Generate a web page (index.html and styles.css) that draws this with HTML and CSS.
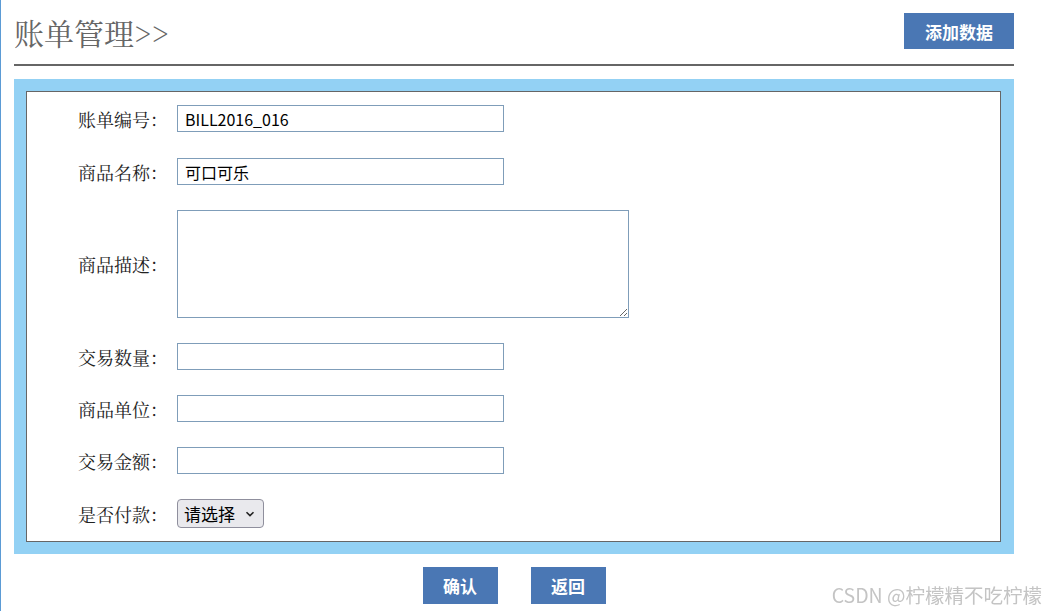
FILE: index.html
```html
<!DOCTYPE html>
<html lang="zh-CN">
<head>
<meta charset="utf-8">
<title>账单管理</title>
<link rel="stylesheet" href="styles.css">
</head>
<body>
<div class="page">
  <div class="header">
    <h1 class="title">账单管理&gt;&gt;</h1>
    <a class="btn btn-add" href="#">添加数据</a>
  </div>
  <div class="panel">
    <form class="form">
      <div class="row">
        <label class="label">账单编号：</label>
        <input class="field" type="text" value="BILL2016_016">
      </div>
      <div class="row">
        <label class="label">商品名称：</label>
        <input class="field" type="text" value="可口可乐">
      </div>
      <div class="row">
        <label class="label">商品描述：</label>
        <textarea class="area"></textarea>
      </div>
      <div class="row">
        <label class="label">交易数量：</label>
        <input class="field" type="text">
      </div>
      <div class="row">
        <label class="label">商品单位：</label>
        <input class="field" type="text">
      </div>
      <div class="row">
        <label class="label">交易金额：</label>
        <input class="field" type="text">
      </div>
      <div class="row">
        <label class="label">是否付款：</label>
        <span class="select-wrap">
          <select class="choice">
            <option>请选择</option>
            <option>未付款</option>
            <option>已付款</option>
          </select>
          <svg class="chevron" width="10" height="6" viewBox="0 0 10 6"><path d="M1.5 1.2 L5 4.6 L8.5 1.2" fill="none" stroke="#222" stroke-width="1.6"/></svg>
        </span>
      </div>
    </form>
  </div>
  <div class="actions">
    <a class="btn btn-action" href="#">确认</a>
    <a class="btn btn-action" href="#">返回</a>
  </div>
</div>
<div class="watermark">CSDN @柠檬精不吃柠檬</div>
</body>
</html>
```
FILE: styles.css
```css
html, body {
  margin: 0;
  padding: 0;
  background: #ffffff;
}

body {
  min-height: 611px;
  border-left: 1px solid #5b9bd5;
  box-sizing: border-box;
  overflow: hidden;
}

.page {
  width: 1000px;
  margin-left: 13px;
}

.header {
  height: 64px;
  display: flex;
  align-items: center;
  justify-content: space-between;
  border-bottom: 2px solid #666666;
}

.title {
  margin: 0;
  font-family: "Noto Serif CJK SC", "Liberation Serif", "Noto Sans CJK SC", serif;
  font-size: 30px;
  font-weight: normal;
  color: #666666;
  line-height: 1;
}

.btn {
  display: flex;
  align-items: center;
  justify-content: center;
  background: #4a77b4;
  color: #ffffff;
  font-family: "Noto Sans CJK SC", "Liberation Sans", sans-serif;
  font-weight: bold;
  text-decoration: none;
  box-sizing: border-box;
}

.btn-add {
  width: 110px;
  height: 36px;
  font-size: 17px;
  margin-top: -2px;
}

.panel {
  margin-top: 13px;
  background: #93d1f4;
  padding: 12px 13px 12px 12px;
}

.form {
  background: #ffffff;
  border: 1px solid #666666;
  padding: 13px 0 13px 0;
  display: flex;
  flex-direction: column;
  gap: 25px;
}

.row {
  display: flex;
  align-items: center;
}

.row:nth-child(2) {
  margin-top: 1px;
}

.label {
  width: 141px;
  margin-right: 9px;
  text-align: right;
  font-family: "Noto Serif CJK SC", "Liberation Serif", "Noto Sans CJK SC", serif;
  font-size: 18px;
  color: #222222;
  white-space: nowrap;
}

.field {
  width: 327px;
  height: 27px;
  box-sizing: border-box;
  border: 1px solid #7f9db9;
  padding: 0 7px;
  margin: 0;
  font-family: "Noto Sans CJK SC", "Liberation Sans", sans-serif;
  font-size: 16px;
  color: #000000;
  outline: none;
}

.area {
  width: 452px;
  height: 108px;
  box-sizing: border-box;
  border: 1px solid #7f9db9;
  margin: 0;
  padding: 2px 6px;
  font-family: "Noto Sans CJK SC", "Liberation Sans", sans-serif;
  font-size: 16px;
  outline: none;
}

.select-wrap {
  position: relative;
  display: inline-flex;
}

.choice {
  appearance: none;
  -webkit-appearance: none;
  width: 87px;
  height: 29px;
  box-sizing: border-box;
  margin: 0;
  padding: 0 0 0 6px;
  background: #e9e9ed;
  border: 1px solid #8f8f9d;
  border-radius: 4px;
  font-family: "Noto Sans CJK SC", "Liberation Sans", sans-serif;
  font-size: 17px;
  color: #000000;
  outline: none;
}

.chevron {
  position: absolute;
  right: 9px;
  top: 12px;
  pointer-events: none;
}

.actions {
  display: flex;
  justify-content: center;
  gap: 33px;
  margin-top: 13px;
}

.btn-action {
  width: 75px;
  height: 37px;
  font-size: 17px;
}

.watermark {
  position: fixed;
  right: 4px;
  bottom: 7px;
  font-family: "Noto Sans CJK SC", "Liberation Sans", sans-serif;
  font-size: 19.5px;
  color: #c4c4c4;
  line-height: 1;
}
```
